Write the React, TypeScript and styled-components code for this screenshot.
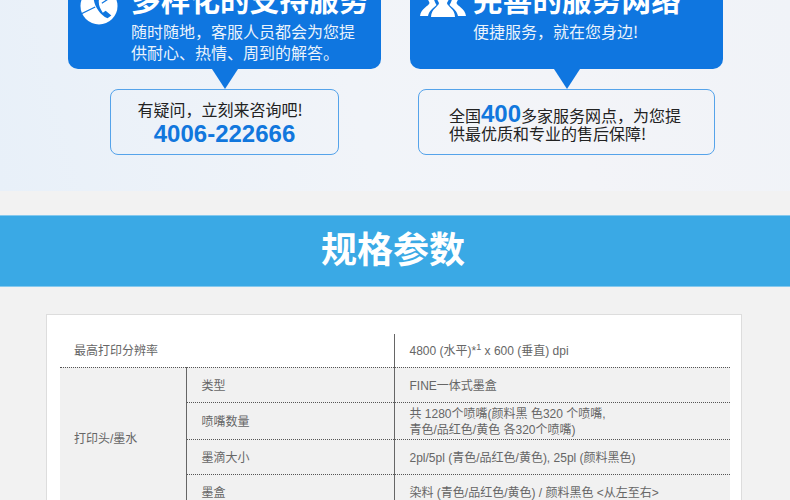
import React from "react";
import styled, { createGlobalStyle } from "styled-components";

const Global = createGlobalStyle`
  html, body { margin: 0; padding: 0; background: #f2f2f2; }
  body { font-family: "Liberation Sans", "Noto Sans CJK SC", sans-serif; overflow: hidden; }
`;
const Page = styled.div`width: 790px; height: 500px; overflow: hidden; background: #f2f2f2;`;
const Service = styled.section`
  height: 191px; overflow: hidden; display: flex; gap: 29px; padding-left: 68px; box-sizing: border-box;
  background: linear-gradient(75deg, #e8f0f9 0%, #f1f4f9 45%, #f3f4f8 70%, #f0f3f8 100%);
`;
const Column = styled.div`width: 313px; display: flex; flex-direction: column; align-items: center;`;
const Bubble = styled.div<{ $pad: number; $gap: number }>`
  width: 100%; height: 99px; margin-top: -30px; flex: none; background: #0f76e0; border-radius: 0 0 10px 10px;
  display: flex; box-sizing: border-box; padding-left: ${(p) => p.$pad}px; gap: ${(p) => p.$gap}px; color: #fff;
`;
const IconSlot = styled.div<{ $top: number }>`flex: none; padding-top: ${(p) => p.$top}px; svg { display: block; }`;
const BubbleText = styled.div`padding-top: 8px;`;
const Title = styled.h2`margin: 0; font: 700 29.5px/40px "Noto Sans CJK SC", sans-serif; white-space: nowrap; letter-spacing: 0.2px;`;
const Sub = styled.p`margin: 3px 0 0; font: 400 16px/21px "Noto Sans CJK SC", sans-serif; white-space: nowrap; color: #eaf3fc;`;
const Arrow = styled.div`
  width: 0; height: 0; flex: none; border-left: 13px solid transparent; border-right: 13px solid transparent; border-top: 20px solid #0f76e0;
`;
const InfoBox = styled.div<{ $w: number }>`
  width: ${(p) => p.$w}px; height: 66px; flex: none; box-sizing: border-box; border: 1px solid #55a3ea; border-radius: 8px; padding-top: 2px;
  display: flex; flex-direction: column; justify-content: center; color: #222;
`;
const BoxLine = styled.div`font: 400 16px/21px "Noto Sans CJK SC", sans-serif; white-space: nowrap; text-align: center; padding-right: 9px;`;
const Hotline = styled.div`font: 700 24px/28px "Liberation Sans", sans-serif; color: #1177dd; text-align: center; white-space: nowrap;`;
const Para = styled.div`padding-left: 30px; font: 400 16px/18px "Noto Sans CJK SC", sans-serif; white-space: nowrap; color: #222;`;
const Big = styled.span`font: 700 24px/18px "Liberation Sans", sans-serif; color: #1177dd;`;
const Band = styled.header`
  margin-top: 24px; height: 72px; box-sizing: border-box; background: #3aa9e5; border-top: 1px solid #85c9ee; border-bottom: 1px solid #85c9ee;
  display: flex; align-items: center; justify-content: center; padding: 0 4px 9px 0;
`;
const BandTitle = styled.h1`margin: 0; font: 700 36px/1 "Noto Sans CJK SC", sans-serif; color: #fff;`;
const Card = styled.div`
  margin: 27px 48px 0 46px; background: #fff; border: 1px solid #ddd; box-sizing: border-box; padding: 19px 11px 0 13px; height: 400px;
`;
const Table = styled.table`
  width: 670px; table-layout: fixed; border-collapse: collapse; font: 400 12px/16px "Liberation Sans", "Noto Sans CJK SC", sans-serif; color: #666;
`;
const Row = styled.tr<{ $h: number; $shade?: boolean }>`
  height: ${(p) => p.$h}px; background: ${(p) => (p.$shade ? "#f1f1f1" : "#fff")};
`;
const Cell = styled.td<{ $divide?: boolean; $left?: number }>`
  padding: 2px 0 0 ${(p) => p.$left ?? 15}px; border-bottom: 1px dotted #555; vertical-align: middle;
  border-right: ${(p) => (p.$divide ? "1px solid #666" : "none")};
`;
const Sup = styled.sup`font-size: 9px; line-height: 0;`;

const PhoneIcon = () => (
  <svg width="38" height="38" viewBox="0 0 40 40">
    <circle cx="20" cy="20" r="19.5" fill="#fff" />
    <path d="M0 29 L16 21 M23 17 L37 8" stroke="#0f76e0" strokeWidth="1.3" />
    <path d="M15 5 C12 14 18 28 29 33 L33 30 L27 25 L24 27 C21 23 19 18 20 13 L23 11 L19 3 Z" fill="#0f76e0" />
  </svg>
);
const PeopleIcon = () => (
  <svg width="46" height="36" viewBox="0 0 46 36" fill="#fff">
    <path d="M23 2 C29 2 31 8 30 14 C29.500 18 28 20 27 22 C27 25 35 28 35 36 L11 36 C11 28 19 25 19 22 C18 20 16.500 18 16 14 C15 8 17 2 23 2 Z" />
    <path d="M33 6 C38 6 40 10 39 15 C38.500 19 37 20 36.500 22 C37 25 45 27 46 35 L38 35 C37 29 31 26 29.500 24 C32 20 34 14 33 6 Z" />
    <path d="M13 6 C8 6 6 10 7 15 C7.500 19 9 20 9.500 22 C9 25 1 27 0 35 L8 35 C9 29 15 26 16.500 24 C14 20 12 14 13 6 Z" />
  </svg>
);

export default function App() {
  return (
    <Page>
      <Global />
      <Service>
        <Column>
          <Bubble $pad={12} $gap={13}>
            <IconSlot $top={17}><PhoneIcon /></IconSlot>
            <BubbleText>
              <Title>多样化的支持服务</Title>
              <Sub>随时随地&#xFF0C;客服人员都会为您提<br />供耐心、热情、周到的解答。</Sub>
            </BubbleText>
          </Bubble>
          <Arrow />
          <InfoBox $w={229}>
            <BoxLine>有疑问&#xFF0C;立刻来咨询吧!</BoxLine>
            <Hotline>4006-222666</Hotline>
          </InfoBox>
        </Column>
        <Column>
          <Bubble $pad={10} $gap={7}>
            <IconSlot $top={11}><PeopleIcon /></IconSlot>
            <BubbleText>
              <Title>完善的服务网络</Title>
              <Sub>便捷服务&#xFF0C;就在您身边!</Sub>
            </BubbleText>
          </Bubble>
          <Arrow />
          <InfoBox $w={297}>
            <Para>全国<Big>400</Big>多家服务网点&#xFF0C;为您提<br />供最优质和专业的售后保障!</Para>
          </InfoBox>
        </Column>
      </Service>
      <Band><BandTitle>规格参数</BandTitle></Band>
      <Card>
        <Table>
          <colgroup>
            <col style={{ width: 126 }} />
            <col style={{ width: 208 }} />
            <col style={{ width: 336 }} />
          </colgroup>
          <tbody>
            <Row $h={33}>
              <Cell colSpan={2} $divide $left={14}>最高打印分辨率</Cell>
              <Cell $left={15}>4800 (水平)*<Sup>1</Sup> x 600 (垂直) dpi</Cell>
            </Row>
            <Row $h={35} $shade>
              <Cell rowSpan={4} $divide $left={14}>打印头/墨水</Cell>
              <Cell $divide>类型</Cell>
              <Cell $left={15}>FINE一体式墨盒</Cell>
            </Row>
            <Row $h={37} $shade>
              <Cell $divide>喷嘴数量</Cell>
              <Cell $left={15}>共 1280个喷嘴(颜料黑 色320 个喷嘴,<br />青色/品红色/黄色 各320个喷嘴)</Cell>
            </Row>
            <Row $h={35} $shade>
              <Cell $divide>墨滴大小</Cell>
              <Cell $left={15}>2pl/5pl (青色/品红色/黄色), 25pl (颜料黑色)</Cell>
            </Row>
            <Row $h={35} $shade>
              <Cell $divide>墨盒</Cell>
              <Cell $left={15}>染料 (青色/品红色/黄色) / 颜料黑色 &lt;从左至右&gt;</Cell>
            </Row>
          </tbody>
        </Table>
      </Card>
    </Page>
  );
}
